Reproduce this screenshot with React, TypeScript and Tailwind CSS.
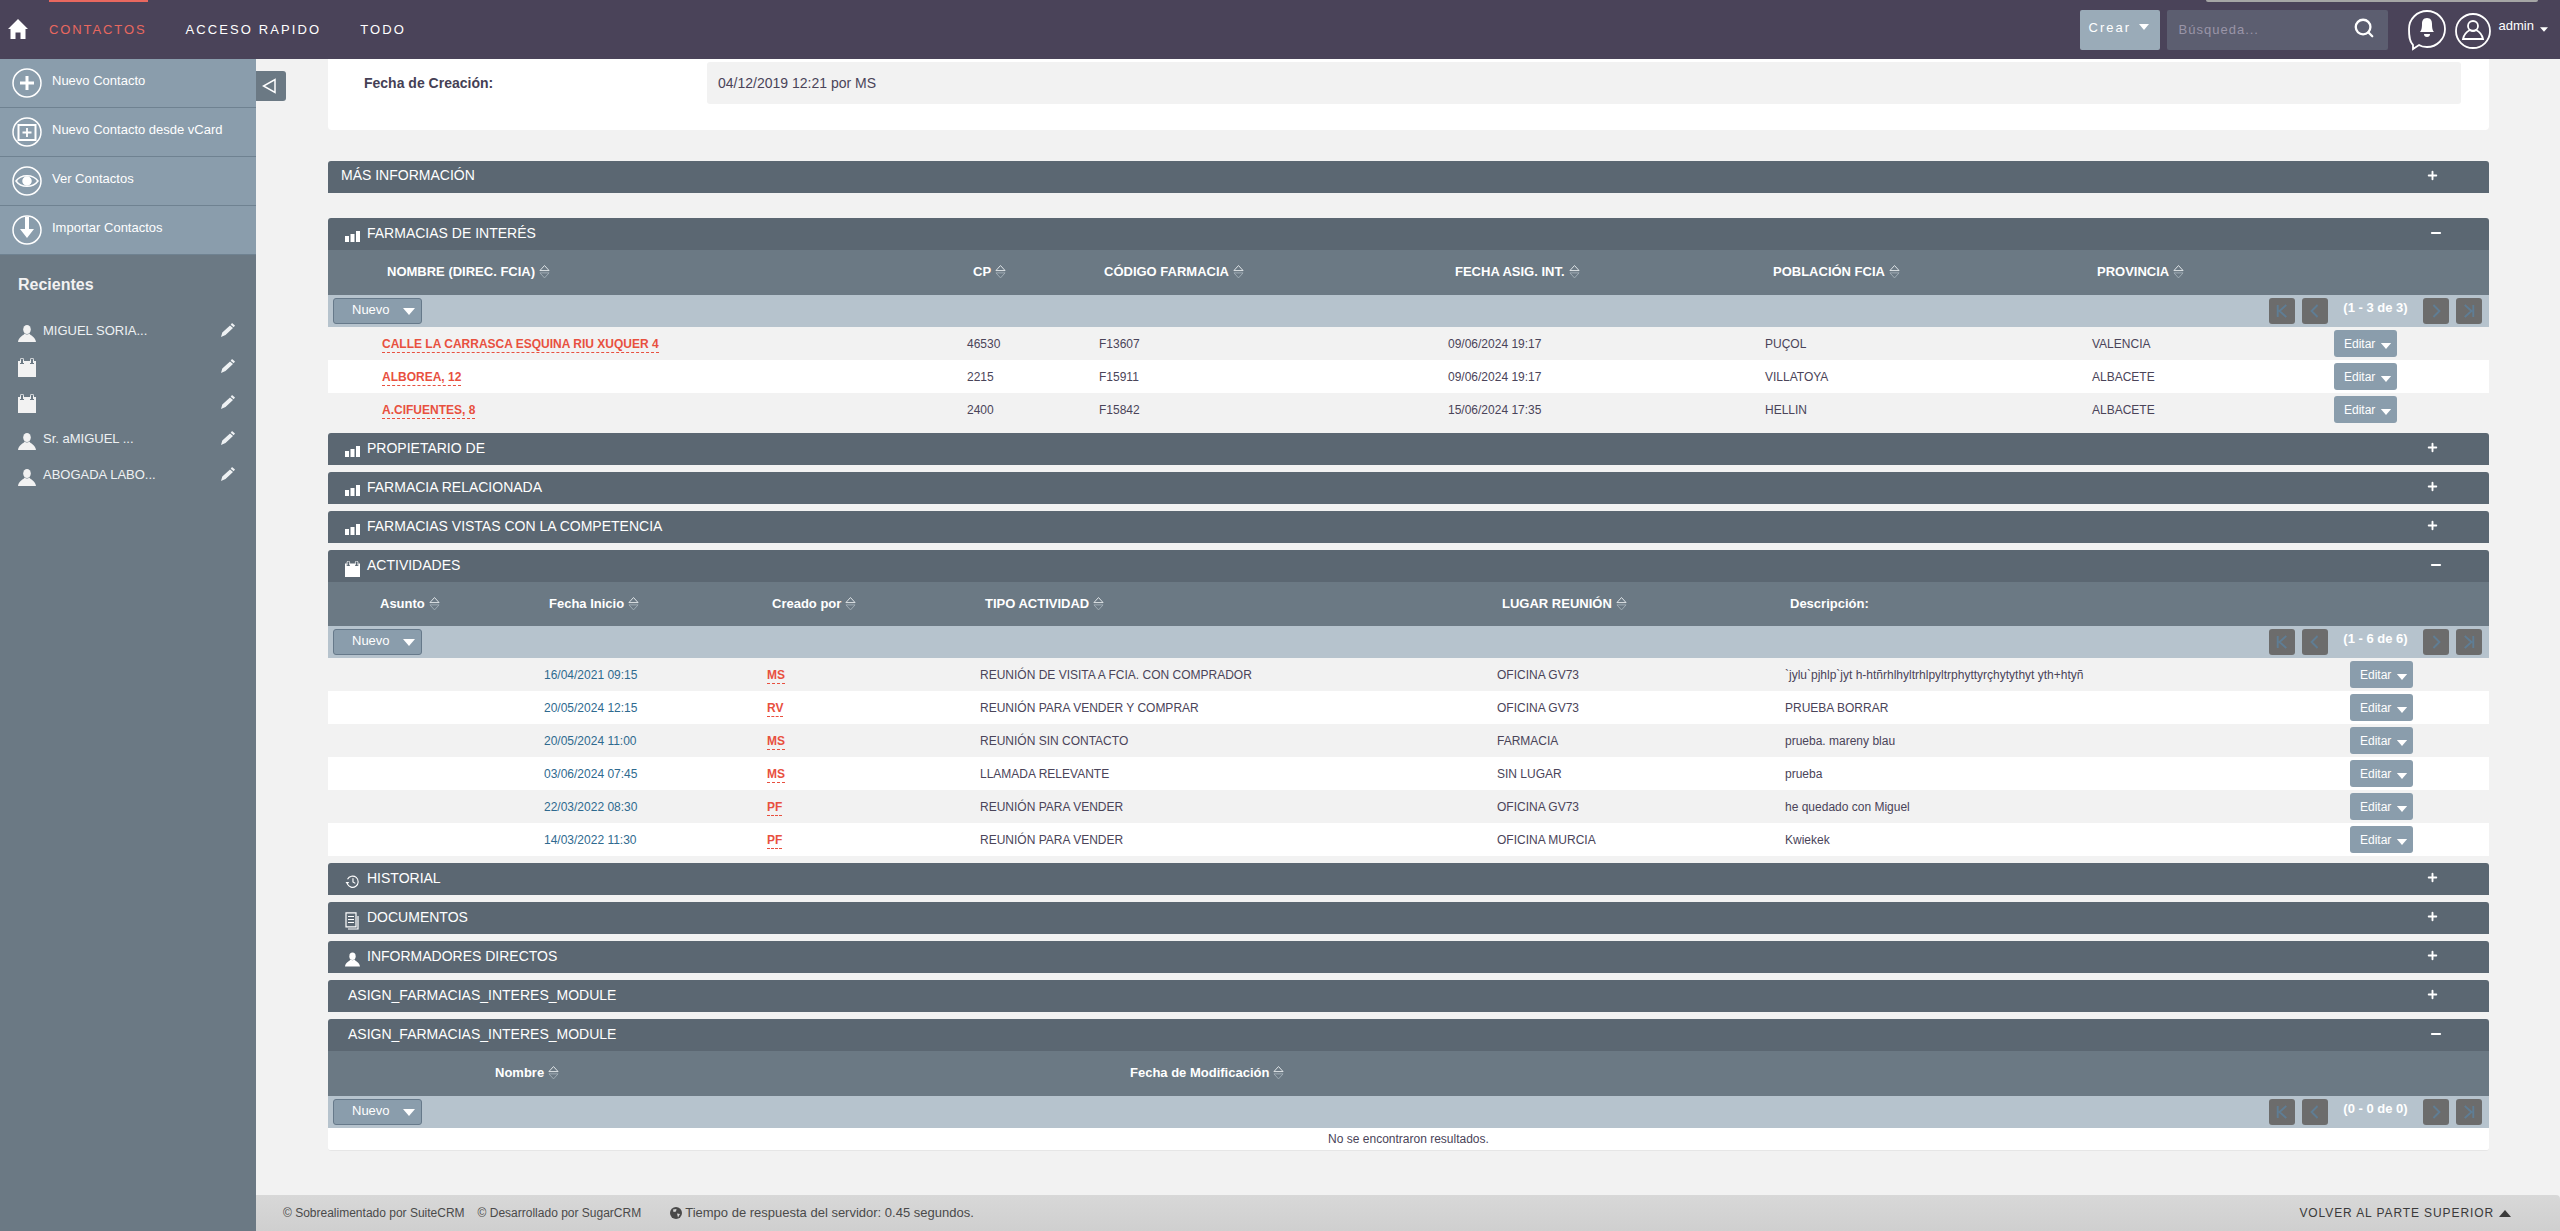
import { Plus, Minus, Search } from 'lucide-react';

const FONT = "font-['Liberation_Sans',Arial,sans-serif]";

const farmaciaCols = 'grid-cols-[54px_585px_132px_349px_317px_327px_242px_1fr]';
const actividadCols = 'grid-cols-[47px_169px_223px_213px_517px_288px_565px_1fr]';
const asignCols = 'grid-cols-[162px_635px_1fr]';

const farmacias = [
  { nombre: 'CALLE LA CARRASCA ESQUINA RIU XUQUER 4', cp: '46530', codigo: 'F13607', fecha: '09/06/2024 19:17', poblacion: 'PUÇOL', provincia: 'VALENCIA' },
  { nombre: 'ALBOREA, 12', cp: '2215', codigo: 'F15911', fecha: '09/06/2024 19:17', poblacion: 'VILLATOYA', provincia: 'ALBACETE' },
  { nombre: 'A.CIFUENTES, 8', cp: '2400', codigo: 'F15842', fecha: '15/06/2024 17:35', poblacion: 'HELLIN', provincia: 'ALBACETE' },
];

const actividades = [
  { fecha: '16/04/2021 09:15', por: 'MS', tipo: 'REUNIÓN DE VISITA A FCIA. CON COMPRADOR', lugar: 'OFICINA GV73', desc: '`jylu`pjhlp`jyt h-htñrhlhyltrhlpyltrphyttyrçhytythyt yth+htyñ' },
  { fecha: '20/05/2024 12:15', por: 'RV', tipo: 'REUNIÓN PARA VENDER Y COMPRAR', lugar: 'OFICINA GV73', desc: 'PRUEBA BORRAR' },
  { fecha: '20/05/2024 11:00', por: 'MS', tipo: 'REUNIÓN SIN CONTACTO', lugar: 'FARMACIA', desc: 'prueba. mareny blau' },
  { fecha: '03/06/2024 07:45', por: 'MS', tipo: 'LLAMADA RELEVANTE', lugar: 'SIN LUGAR', desc: 'prueba' },
  { fecha: '22/03/2022 08:30', por: 'PF', tipo: 'REUNIÓN PARA VENDER', lugar: 'OFICINA GV73', desc: 'he quedado con Miguel' },
  { fecha: '14/03/2022 11:30', por: 'PF', tipo: 'REUNIÓN PARA VENDER', lugar: 'OFICINA MURCIA', desc: 'Kwiekek' },
];

function Caret({ className }: { className?: string }) {
  return (
    <svg viewBox="0 0 12 7" className={className} fill="currentColor">
      <path d="M0 0h12L6 7z" />
    </svg>
  );
}

function SortArrows() {
  return (
    <svg viewBox="0 0 12 16" className="w-[11px] h-[15px] ml-[4px] shrink-0 -mt-[1px]" fill="none" strokeWidth="1">
      <path d="M1 7 6 1.500 11 7z" stroke="#e8ecef" />
      <path d="M1 9.500 6 15l5-5.500z" stroke="#a3afb8" />
    </svg>
  );
}

function BarsIcon() {
  return (
    <svg viewBox="0 0 15 11" className="w-[15px] h-[11px] fill-white">
      <rect x="0" y="5" width="4" height="6" />
      <rect x="5.500" y="3" width="4" height="8" />
      <rect x="11" y="0" width="4" height="11" />
    </svg>
  );
}

function CalendarIcon({ className, fill = '#fff' }: { className?: string; fill?: string }) {
  return (
    <svg viewBox="0 0 18 19" className={className}>
      <path fill={fill} d="M0 3h2v3h4V3h6v3h4V3h2v16H0z" />
      <path fill="none" stroke={fill} strokeWidth="1" d="M2.500 5V1.500a1 1 0 0 1 3 0V5M12.500 5V1.500a1 1 0 0 1 3 0V5" />
    </svg>
  );
}

function PersonIcon({ className, fill = '#fff' }: { className?: string; fill?: string }) {
  return (
    <svg viewBox="0 0 18 17" className={className} fill={fill}>
      <ellipse cx="9" cy="4.500" rx="3.800" ry="4.500" />
      <path d="M6.500 8.500C6 10.500 0.500 11.500 0 17h18c-.5-5.500-6-6.500-6.500-8.500-1.500 1.200-3.500 1.200-5 0z" />
    </svg>
  );
}

function PencilIcon() {
  return (
    <svg viewBox="0 0 14 14" className="w-[14px] h-[14px]" fill="#eef1f3">
      <path d="M11 0l3 2.500-1.300 1.700-3-2.500zM9 2.500l3 2.500-7.500 7L0 14l1.300-4.500z" />
    </svg>
  );
}

function HistoryIcon() {
  return (
    <svg viewBox="0 0 16 16" className="w-[15px] h-[15px]" fill="none" stroke="#fff" strokeWidth="1.200">
      <path d="M2.500 10.500a6 6 0 1 0 .2-5" />
      <path d="M0.500 8.500h4l-2 2.600z" fill="#fff" stroke="none" />
      <path d="M8.500 4.500v4l2.500 1.500" />
    </svg>
  );
}

function DocumentIcon() {
  return (
    <svg viewBox="0 0 15 18" className="w-[15px] h-[18px]" fill="none" stroke="#fff" strokeWidth="1.200">
      <path d="M1 .8h10v14H1zM13 4v13H3" />
      <path d="M3 4.500h6M3 7.500h6M3 10.500h6" />
    </svg>
  );
}

function PageIcon({ kind }: { kind: 'first' | 'prev' | 'next' | 'last' }) {
  const paths = {
    first: 'M2 1v14M12 1 4 8l8 7',
    prev: 'M10 1 3 8l7 7',
    next: 'M4 1l7 7-7 7',
    last: 'M12 1v14M2 1l8 7-8 7',
  };
  return (
    <span className="w-[26px] h-[26px] rounded-[3px] bg-[#6c6c6c] flex items-center justify-center">
      <svg viewBox="0 0 14 16" className="w-[12px] h-[14px]" fill="none" stroke="#5f7d94" strokeWidth="2.200">
        <path d={paths[kind]} />
      </svg>
    </span>
  );
}

function Toolbar({ range }: { range: string }) {
  return (
    <div className="h-[32px] bg-[#b6c3cd] flex items-center justify-between pl-[5px] pr-[7px]">
      <button className="w-[89px] h-[26px] rounded-[3px] bg-[#8a9dac] border border-[#66798a] text-white text-[13px] flex items-center pl-[18px]">
        <span className="-mt-[2px]">Nuevo</span>
        <Caret className="w-[12px] h-[7px] ml-[13px]" />
      </button>
      <div className="flex items-center gap-[7px]">
        <PageIcon kind="first" />
        <PageIcon kind="prev" />
        <span className="w-[81px] text-center text-white text-[13px] font-bold -mt-[7px]">{range}</span>
        <PageIcon kind="next" />
        <PageIcon kind="last" />
      </div>
    </div>
  );
}

function PanelHeader({ title, icon, open }: { title: string; icon?: React.ReactNode; open?: boolean }) {
  return (
    <div className="h-[32px] bg-[#5b6772] rounded-t-[3px] flex items-center text-white">
      {icon ? (
        <span className="w-[39px] flex justify-end pr-[7px] pt-[5px]">{icon}</span>
      ) : null}
      <span className={`text-[14px] ${icon ? 'pb-[2px]' : title.startsWith('ASIGN') ? 'pl-[20px] pb-[2px]' : 'pl-[13px] pb-[4px]'}`}>{title}</span>
      {open ? (
        <Minus size={14} strokeWidth={3.500} className="ml-auto mr-[46px] mb-[2px]" />
      ) : (
        <Plus size={13} strokeWidth={3.500} className="ml-auto mr-[50px] mb-[3px]" />
      )}
    </div>
  );
}

function HeadCell({ label, sort = true, className = 'pl-[5px]' }: { label: string; sort?: boolean; className?: string }) {
  return (
    <div className={`flex items-center text-white text-[13px] font-bold ${className}`}>
      {label}
      {sort && <SortArrows />}
    </div>
  );
}

function RedLink({ children }: { children: React.ReactNode }) {
  return (
    <span className="inline-block leading-[15px] text-[#e8503f] font-bold border-b border-dashed border-[#e8503f]">
      {children}
    </span>
  );
}

function EditButton() {
  return (
    <button className="w-[63px] h-[27px] rounded-[3px] bg-[#8a9dac] text-white text-[12px] flex items-center pl-[10px]">
      Editar
      <Caret className="w-[12px] h-[6px] ml-[5px] mt-[5px]" />
    </button>
  );
}

function SideItem({ label, icon }: { label: string; icon: React.ReactNode }) {
  return (
    <div className="h-[49px] border-b border-[#6f8291] flex items-center pl-[12px] text-white text-[13px]">
      <svg viewBox="0 0 30 30" className="w-[30px] h-[30px]" fill="none" stroke="#fff" strokeWidth="1.500">
        <circle cx="15" cy="15" r="14" />
        {icon}
      </svg>
      <span className="ml-[10px] pb-[5px]">{label}</span>
    </div>
  );
}

function Recent({ label, kind }: { label?: string; kind: 'person' | 'calendar' }) {
  return (
    <div className="h-[36px] flex items-center pl-[18px] pr-[21px] text-[13px] text-[#eef1f3]">
      {kind === 'person' ? (
        <PersonIcon className="w-[18px] h-[17px] mt-[4px]" fill="#f2f2f2" />
      ) : (
        <CalendarIcon className="w-[18px] h-[19px] mt-[1px]" fill="#f2f2f2" />
      )}
      <span className="ml-[7px]">{label}</span>
      <span className="ml-auto -mt-[2px]">
        <PencilIcon />
      </span>
    </div>
  );
}

function TopNav() {
  return (
    <header className="relative h-[59px] bg-[#4a4359] flex items-center text-white shrink-0">
      <svg viewBox="0 0 20 20" className="w-[20px] h-[20px] ml-[8px] mb-[1px]" fill="#fff">
        <path d="M10 0 20 10h-2.500v10h-5v-6.500h-5V20h-5V10H0z" />
      </svg>
      <div className="ml-[21px] text-[13px] tracking-[1.900px] text-[#e9685f] pt-[1px]">CONTACTOS</div>
      <span className="absolute left-[49px] top-0 w-[99px] h-[2px] bg-[#e9685f]" />
      <div className="ml-[39px] text-[13px] tracking-[2.100px] pt-[1px]">ACCESO RAPIDO</div>
      <div className="ml-[39px] text-[13px] tracking-[2.100px] pt-[1px]">TODO</div>

      <span className="absolute left-[2206px] top-0 w-[332px] h-[2px] rounded-b-[3px] bg-[#a5a5a5]" />

      <button className="ml-auto w-[80px] h-[40px] rounded-[2px] bg-[#9aabb8] flex items-center pl-[9px] text-[13px] tracking-[2px]">
        <span className="pb-[3px]">Crear</span>
        <Caret className="w-[10px] h-[6px] ml-[8px] mb-[5px]" />
      </button>
      <div className="ml-[7px] w-[221px] h-[40px] rounded-[2px] bg-[#5c5e70] flex items-center pl-[12px] pr-[13px] text-[13px] tracking-[1px] text-[#9a95a8]">
        <span>Búsqueda...</span>
        <Search size={22} strokeWidth={2.500} className="ml-auto text-white mb-[4px]" />
      </div>
      <svg viewBox="0 0 38 42" className="ml-[20px] w-[38px] h-[42px]" fill="none" stroke="#fff" strokeWidth="1.800">
        <path d="M5 36C1 32 1 26 1 20 1 10 9 2 19 2s18 8 18 18-8 18-18 18c-3 0-6-.6-8-2l-6 4z" />
        <path d="M19 9c-4 0-5 3-5 6 0 5-1 7-2 8h14c-1-1-2-3-2-8 0-3-1-6-5-6z" fill="#fff" stroke="none" />
        <path d="M16 25a3 3 0 0 0 6 0z" fill="#fff" stroke="none" />
      </svg>
      <svg viewBox="0 0 36 36" className="ml-[9px] w-[36px] h-[36px] mt-[2px]" fill="none" stroke="#fff" strokeWidth="1.800">
        <circle cx="18" cy="18" r="17" />
        <circle cx="18" cy="13" r="5" />
        <path d="M8 26c1-5 5-8 7-9 2 1 4 1 6 0 2 1 6 4 7 9z" />
      </svg>
      <span className="ml-[8px] text-[13px] mb-[8px]">admin</span>
      <Caret className="w-[8px] h-[5px] ml-[6px] mr-[12px] mb-[1px]" />
    </header>
  );
}

function Sidebar() {
  return (
    <aside className="w-[256px] shrink-0 bg-[#6b7984]">
      <div className="bg-[#8a9dac]">
        <SideItem label="Nuevo Contacto" icon={<path d="M15 8v14M8 15h14" strokeWidth="3" />} />
        <SideItem
          label="Nuevo Contacto desde vCard"
          icon={
            <>
              <rect x="6.500" y="8" width="17" height="15" strokeWidth="2" />
              <path d="M15 11v9M10.500 15.500h9" strokeWidth="1.800" />
            </>
          }
        />
        <SideItem
          label="Ver Contactos"
          icon={
            <>
              <path d="M4 15c5-7 17-7 22 0-5 7-17 7-22 0z" />
              <circle cx="15" cy="15" r="4" fill="#fff" />
            </>
          }
        />
        <SideItem label="Importar Contactos" icon={<path d="M13 2h4v12h5l-7 9-7-9h5z" fill="#fff" strokeWidth="0" />} />
      </div>
      <div className="pt-[18px] pl-[18px] pb-[16px] text-[16px] font-bold text-[#f2f2f2]">Recientes</div>
      <Recent kind="person" label="MIGUEL SORIA..." />
      <Recent kind="calendar" />
      <Recent kind="calendar" />
      <Recent kind="person" label="Sr. aMIGUEL ..." />
      <Recent kind="person" label="ABOGADA LABO..." />
    </aside>
  );
}

function FarmaciasTable() {
  return (
    <div className="mb-[7px]">
      <PanelHeader title="FARMACIAS DE INTERÉS" icon={<BarsIcon />} open />
      <div className={`h-[45px] bg-[#6b7984] grid pb-[2px] ${farmaciaCols}`}>
        <div />
        <HeadCell label="NOMBRE (DIREC. FCIA)" />
        <HeadCell label="CP" className="pl-[6px]" />
        <HeadCell label="CÓDIGO FARMACIA" />
        <HeadCell label="FECHA ASIG. INT." className="pl-[7px]" />
        <HeadCell label="POBLACIÓN FCIA" className="pl-[8px]" />
        <HeadCell label="PROVINCIA" />
      </div>
      <Toolbar range="(1 - 3 de 3)" />
      {farmacias.map((f, i) => (
        <div key={f.nombre} className={`h-[33px] grid ${farmaciaCols} items-center text-[12px] text-[#4a4459] ${i % 2 === 0 ? 'bg-[#f2f2f2]' : 'bg-white'}`}>
          <div />
          <div><RedLink>{f.nombre}</RedLink></div>
          <div>{f.cp}</div>
          <div>{f.codigo}</div>
          <div>{f.fecha}</div>
          <div>{f.poblacion}</div>
          <div>{f.provincia}</div>
          <EditButton />
        </div>
      ))}
    </div>
  );
}

function ActividadesTable() {
  return (
    <div className="mb-[7px]">
      <PanelHeader title="ACTIVIDADES" icon={<CalendarIcon className="w-[15px] h-[16px]" />} open />
      <div className={`h-[44px] bg-[#6b7984] grid ${actividadCols}`}>
        <div />
        <HeadCell label="Asunto" />
        <HeadCell label="Fecha Inicio" />
        <HeadCell label="Creado por" />
        <HeadCell label="TIPO ACTIVIDAD" />
        <HeadCell label="LUGAR REUNIÓN" />
        <HeadCell label="Descripción:" sort={false} />
      </div>
      <Toolbar range="(1 - 6 de 6)" />
      {actividades.map((a, i) => (
        <div key={i} className={`h-[33px] grid ${actividadCols} items-center text-[12px] text-[#4a4459] ${i % 2 === 0 ? 'bg-[#f2f2f2]' : 'bg-white'}`}>
          <div />
          <div />
          <div className="text-[#2f6a8f]">{a.fecha}</div>
          <div><RedLink>{a.por}</RedLink></div>
          <div>{a.tipo}</div>
          <div>{a.lugar}</div>
          <div>{a.desc}</div>
          <EditButton />
        </div>
      ))}
    </div>
  );
}

export default function App() {
  return (
    <div className={`h-screen overflow-hidden flex flex-col bg-[#f2f2f2] ${FONT}`}>
      <TopNav />
      <div className="flex flex-1 min-h-0">
        <Sidebar />
        <main className="relative flex-1 min-w-0 flex flex-col">
          <button className="absolute left-0 top-[12px] w-[30px] h-[30px] rounded-r-[3px] bg-[#6b7984] flex items-center justify-center">
            <svg viewBox="0 0 14 16" className="w-[14px] h-[16px] mr-[4px]" fill="none" stroke="#fff" strokeWidth="1.500">
              <path d="M13 1.500v13L1.500 8z" />
            </svg>
          </button>

          <div className="flex-1 min-h-0 pl-[72px] pr-[71px] overflow-hidden">
            <div className="h-[71px] bg-white rounded-b-[4px] pl-[36px] pr-[28px] pt-[3px] pb-[26px] flex items-center mb-[31px]">
              <div className="w-[343px] text-[14px] font-bold text-[#453f55]">Fecha de Creación:</div>
              <div className="flex-1 h-[42px] rounded-[3px] bg-[#f2f2f2] flex items-center pl-[11px] pt-[1px] text-[14px] text-[#4a4459]">
                04/12/2019 12:21 por MS
              </div>
            </div>

            <div className="mb-[25px]"><PanelHeader title="MÁS INFORMACIÓN" /></div>

            <FarmaciasTable />
            <div className="mb-[7px]"><PanelHeader title="PROPIETARIO DE" icon={<BarsIcon />} /></div>
            <div className="mb-[7px]"><PanelHeader title="FARMACIA RELACIONADA" icon={<BarsIcon />} /></div>
            <div className="mb-[7px]"><PanelHeader title="FARMACIAS VISTAS CON LA COMPETENCIA" icon={<BarsIcon />} /></div>
            <ActividadesTable />
            <div className="mb-[7px]"><PanelHeader title="HISTORIAL" icon={<HistoryIcon />} /></div>
            <div className="mb-[7px]"><PanelHeader title="DOCUMENTOS" icon={<DocumentIcon />} /></div>
            <div className="mb-[7px]"><PanelHeader title="INFORMADORES DIRECTOS" icon={<PersonIcon className="w-[15px] h-[15px]" />} /></div>
            <div className="mb-[7px]"><PanelHeader title="ASIGN_FARMACIAS_INTERES_MODULE" /></div>

            <div>
              <PanelHeader title="ASIGN_FARMACIAS_INTERES_MODULE" open />
              <div className={`h-[45px] bg-[#6b7984] grid pb-[2px] ${asignCols}`}>
                <div />
                <HeadCell label="Nombre" />
                <HeadCell label="Fecha de Modificación" />
              </div>
              <Toolbar range="(0 - 0 de 0)" />
              <div className="h-[23px] bg-white rounded-b-[3px] border-b border-[#e6e6e6] flex items-center justify-center text-[12px] text-[#4a4459]">
                No se encontraron resultados.
              </div>
            </div>
          </div>

          <footer className="h-[36px] shrink-0 bg-gradient-to-b from-[#d8d8d8] to-[#cfcfcf] rounded-tr-[4px] flex items-center pl-[27px] pr-[49px] text-[12px] text-[#4a4a4a]">
            <span>© Sobrealimentado por SuiteCRM</span>
            <span className="ml-[13px]">© Desarrollado por SugarCRM</span>
            <svg viewBox="0 0 12 12" className="ml-[29px] w-[12px] h-[12px]">
              <circle cx="6" cy="6" r="6" fill="#4a4a4a" />
              <path d="M3 2.500 6.500 2 6 4.500 3.500 5zM7 6.500l3 .5-2 3.500z" fill="#d6d6d6" />
            </svg>
            <span className="ml-[3px] text-[13px]">Tiempo de respuesta del servidor: 0.45 segundos.</span>
            <span className="ml-auto tracking-[.9px] text-[#3a3a3a]">VOLVER AL PARTE SUPERIOR</span>
            <svg viewBox="0 0 12 7" className="ml-[5px] w-[12px] h-[7px]" fill="#3a3a3a">
              <path d="M6 0l6 7H0z" />
            </svg>
          </footer>
        </main>
      </div>
    </div>
  );
}
